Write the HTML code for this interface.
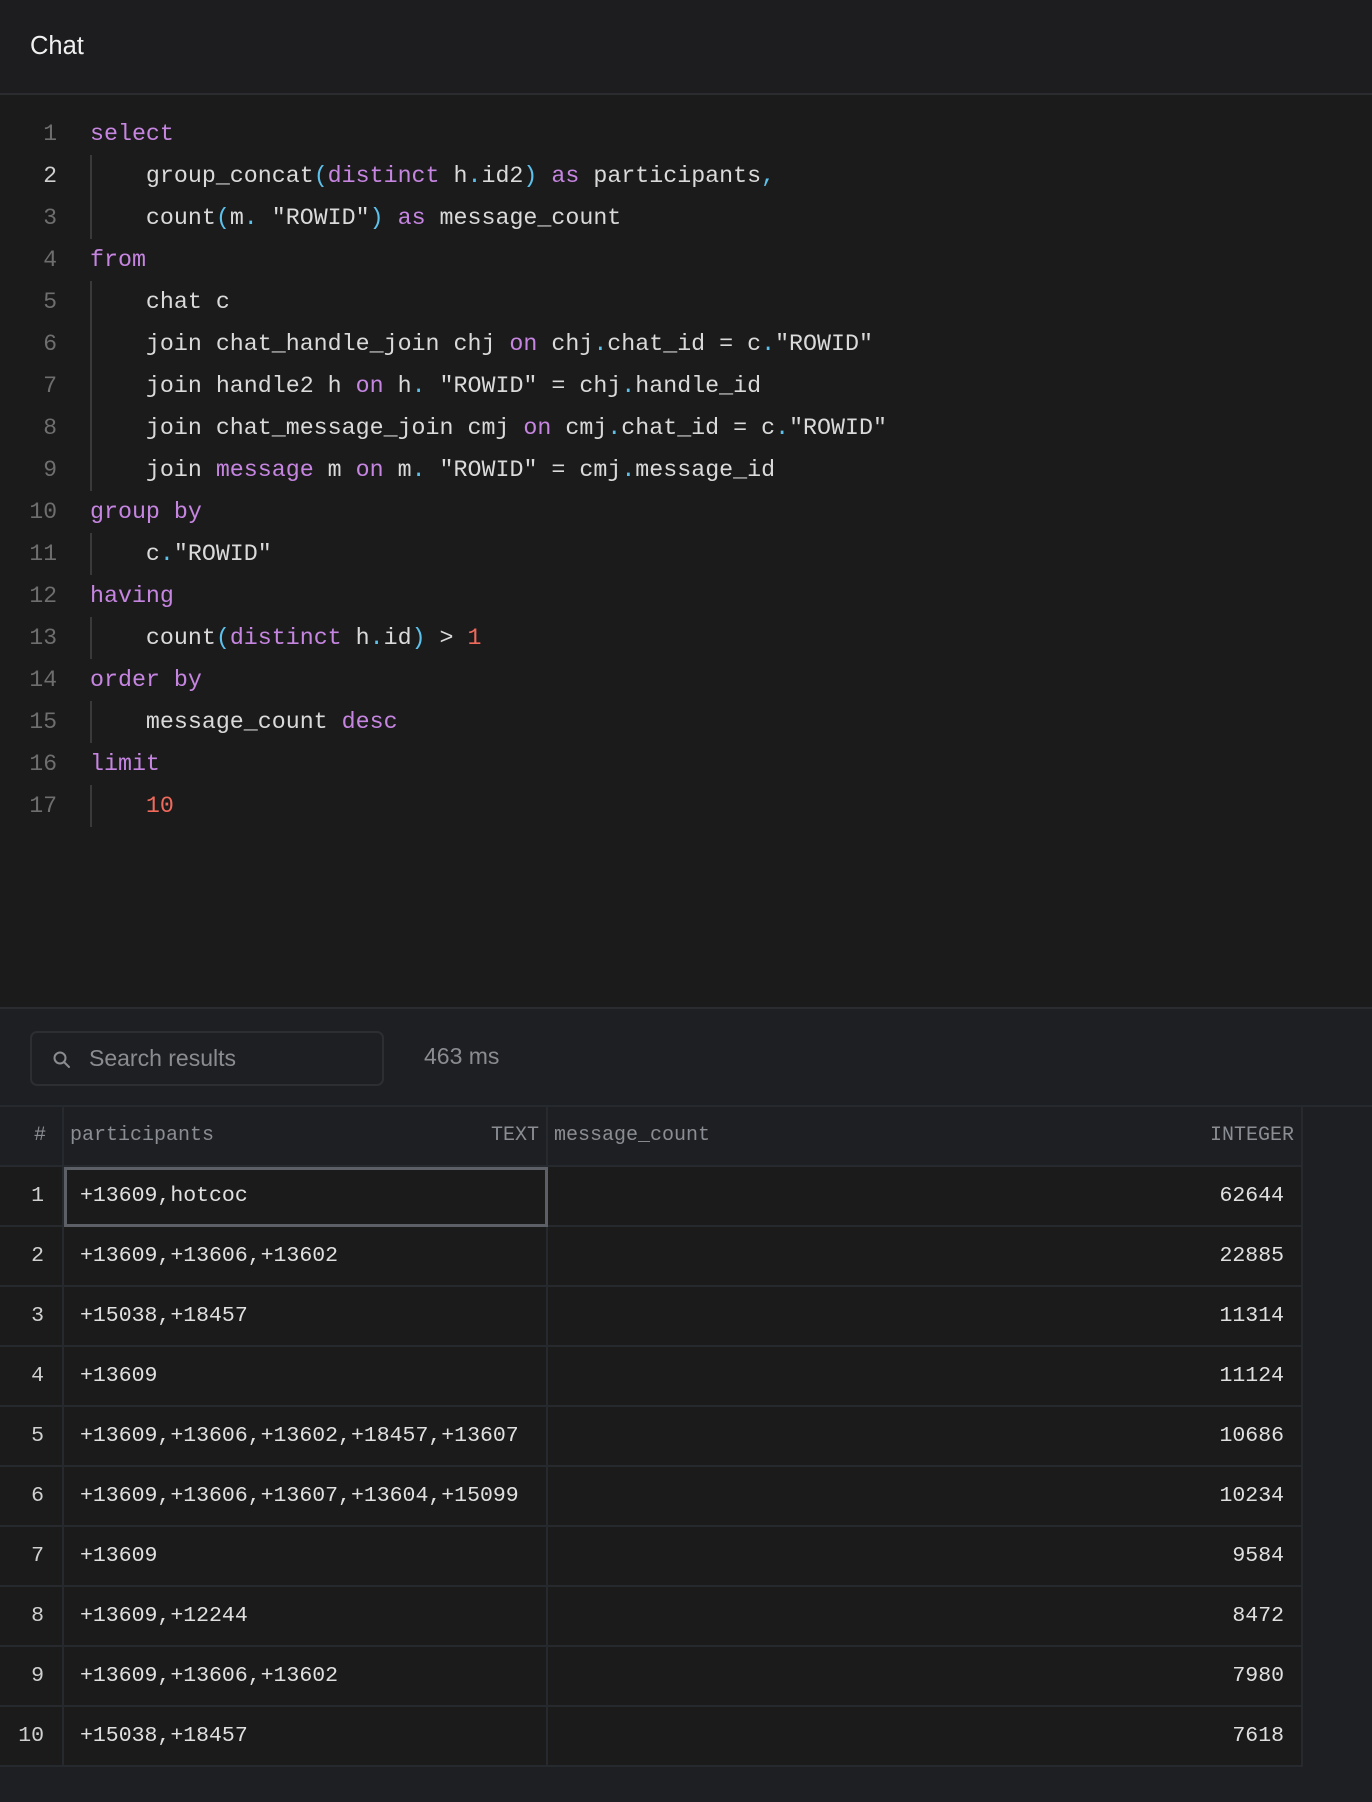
<!DOCTYPE html>
<html><head><meta charset="utf-8">
<style>
*{margin:0;padding:0;box-sizing:border-box}
html,body{width:1372px;height:1802px;background:#1e1f22;overflow:hidden}
body{position:relative;font-family:"Liberation Sans",sans-serif;color:#e0e0e0}
.top{position:absolute;left:0;top:0;width:1372px;height:95px;background:#1d1d20;border-bottom:2px solid #2a2c30}
.top span{position:absolute;left:30px;top:32px;font-size:25.5px;color:#f0f0f0}
.ed{position:absolute;left:0;top:95px;width:1372px;height:914px;background:#1b1b1b;border-bottom:2px solid #2a2c30}
.ln{position:absolute;left:0;width:57px;text-align:right;font-family:"Liberation Mono",monospace;font-size:23px;color:#6e6e6e;height:42px;line-height:42px}
.cl{position:absolute;left:90px;font-family:"Liberation Mono",monospace;font-size:23.3px;color:#dadada;height:42px;line-height:42px;white-space:pre}
.g{position:absolute;left:90px;width:2px;background:#3a3a3a}
.k{color:#c585e0}.p{color:#5cc2ec}.n{color:#f06a5c}
.bar{position:absolute;left:0;top:1009px;width:1372px;height:98px;background:#1e1f22;border-bottom:2px solid #26292d}
.search{position:absolute;left:30px;top:22px;width:354px;height:55px;border:2px solid #2c2e32;border-radius:7px}
.search svg{position:absolute;left:20px;top:17px}
.search span{position:absolute;left:57px;top:12px;font-size:23px;color:#8a8c91}
.ms{position:absolute;left:424px;top:34px;font-size:23px;color:#8a8c91}
.tbl{position:absolute;left:0;top:1107px;width:1303px}
.row{position:relative;height:60px;border-bottom:2px solid #26292d;background:#1b1b1b}
.hdr{background:#1e1f22;height:60px}
.c{position:absolute;top:0;height:100%;border-right:2px solid #26292d;font-family:"Liberation Mono",monospace;font-size:21.5px;line-height:58px;white-space:pre}
.c0{left:0;width:64px;text-align:right;padding-right:18px;color:#d0d0d0}
.c1{left:64px;width:484px;padding-left:16px}
.c2{left:548px;width:755px;text-align:right;padding-right:17px}
.hdr .c{color:#8a8d93;font-size:20px}
.sel{position:absolute;left:64px;top:0;width:484px;height:60px;border:3px solid #5c5f66}
</style></head><body>
<div class="top"><span>Chat</span></div>
<div class="ed">
<div class="g" style="top:60px;height:84px"></div>
<div class="g" style="top:186px;height:210px"></div>
<div class="g" style="top:438px;height:42px"></div>
<div class="g" style="top:522px;height:42px"></div>
<div class="g" style="top:606px;height:42px"></div>
<div class="g" style="top:690px;height:42px"></div>

<div class="ln" style="top:18px">1</div><div class="cl" style="top:18px"><span class="k">select</span></div>
<div class="ln" style="top:60px;color:#cfcfcf">2</div><div class="cl" style="top:60px">    group_concat<span class="p">(</span><span class="k">distinct</span> h<span class="p">.</span>id2<span class="p">)</span> <span class="k">as</span> participants<span class="p">,</span></div>
<div class="ln" style="top:102px">3</div><div class="cl" style="top:102px">    count<span class="p">(</span>m<span class="p">.</span> "ROWID"<span class="p">)</span> <span class="k">as</span> message_count</div>
<div class="ln" style="top:144px">4</div><div class="cl" style="top:144px"><span class="k">from</span></div>
<div class="ln" style="top:186px">5</div><div class="cl" style="top:186px">    chat c</div>
<div class="ln" style="top:228px">6</div><div class="cl" style="top:228px">    join chat_handle_join chj <span class="k">on</span> chj<span class="p">.</span>chat_id = c<span class="p">.</span>"ROWID"</div>
<div class="ln" style="top:270px">7</div><div class="cl" style="top:270px">    join handle2 h <span class="k">on</span> h<span class="p">.</span> "ROWID" = chj<span class="p">.</span>handle_id</div>
<div class="ln" style="top:312px">8</div><div class="cl" style="top:312px">    join chat_message_join cmj <span class="k">on</span> cmj<span class="p">.</span>chat_id = c<span class="p">.</span>"ROWID"</div>
<div class="ln" style="top:354px">9</div><div class="cl" style="top:354px">    join <span class="k">message</span> m <span class="k">on</span> m<span class="p">.</span> "ROWID" = cmj<span class="p">.</span>message_id</div>
<div class="ln" style="top:396px">10</div><div class="cl" style="top:396px"><span class="k">group by</span></div>
<div class="ln" style="top:438px">11</div><div class="cl" style="top:438px">    c<span class="p">.</span>"ROWID"</div>
<div class="ln" style="top:480px">12</div><div class="cl" style="top:480px"><span class="k">having</span></div>
<div class="ln" style="top:522px">13</div><div class="cl" style="top:522px">    count<span class="p">(</span><span class="k">distinct</span> h<span class="p">.</span>id<span class="p">)</span> &gt; <span class="n">1</span></div>
<div class="ln" style="top:564px">14</div><div class="cl" style="top:564px"><span class="k">order by</span></div>
<div class="ln" style="top:606px">15</div><div class="cl" style="top:606px">    message_count <span class="k">desc</span></div>
<div class="ln" style="top:648px">16</div><div class="cl" style="top:648px"><span class="k">limit</span></div>
<div class="ln" style="top:690px">17</div><div class="cl" style="top:690px">    <span class="n">10</span></div>
</div>
<div class="bar">
<div class="search"><svg width="20" height="20" viewBox="0 0 20 20"><circle cx="8" cy="8" r="5.5" fill="none" stroke="#8a8c91" stroke-width="2"/><path d="M12 12 L17 17" stroke="#8a8c91" stroke-width="2" stroke-linecap="round"/></svg><span>Search results</span></div>
<div class="ms">463 ms</div>
</div>
<div class="tbl">
<div class="row hdr"><div class="c c0" style="padding-right:16px">#</div><div class="c c1" style="padding-left:6px">participants<span style="position:absolute;right:7px">TEXT</span></div><div class="c c2" style="text-align:left;padding-left:6px">message_count<span style="position:absolute;right:7px">INTEGER</span></div></div>
<div class="row"><div class="c c0">1</div><div class="c c1">+13609,hotcoc</div><div class="c c2">62644</div><div class="sel"></div></div>
<div class="row"><div class="c c0">2</div><div class="c c1">+13609,+13606,+13602</div><div class="c c2">22885</div></div>
<div class="row"><div class="c c0">3</div><div class="c c1">+15038,+18457</div><div class="c c2">11314</div></div>
<div class="row"><div class="c c0">4</div><div class="c c1">+13609</div><div class="c c2">11124</div></div>
<div class="row"><div class="c c0">5</div><div class="c c1">+13609,+13606,+13602,+18457,+13607</div><div class="c c2">10686</div></div>
<div class="row"><div class="c c0">6</div><div class="c c1">+13609,+13606,+13607,+13604,+15099</div><div class="c c2">10234</div></div>
<div class="row"><div class="c c0">7</div><div class="c c1">+13609</div><div class="c c2">9584</div></div>
<div class="row"><div class="c c0">8</div><div class="c c1">+13609,+12244</div><div class="c c2">8472</div></div>
<div class="row"><div class="c c0">9</div><div class="c c1">+13609,+13606,+13602</div><div class="c c2">7980</div></div>
<div class="row"><div class="c c0">10</div><div class="c c1">+15038,+18457</div><div class="c c2">7618</div></div>
</div>
</body></html>
